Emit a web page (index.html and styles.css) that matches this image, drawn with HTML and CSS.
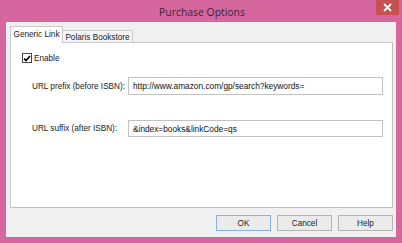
FILE: index.html
```html
<!DOCTYPE html>
<html>
<head>
<meta charset="utf-8">
<link rel="stylesheet" href="styles.css">
</head>
<body>
<div class="window">
  <div class="titlebar">
    <span class="title">Purchase Options</span>
    <div class="close"><svg width="9" height="9" viewBox="0 0 9 9"><path d="M1 1L8 8M8 1L1 8" stroke="#fff" stroke-width="1.8"/></svg></div>
  </div>
  <div class="client">
    <div class="tabstrip">
      <div class="tab active">Generic Link</div>
      <div class="tab">Polaris Bookstore</div>
    </div>
    <div class="panel">
      <div class="check">
        <span class="box"><svg width="9" height="9" viewBox="0 0 9 9"><path d="M1.2 4.6L3.4 6.9L7.9 1.6" fill="none" stroke="#000" stroke-width="1.8"/></svg></span>
        <span>Enable</span>
      </div>
      <div class="row first">
        <span class="lbl">URL prefix (before ISBN):</span>
        <div class="input">http://www.amazon.com/gp/search?keywords=</div>
      </div>
      <div class="row second">
        <span class="lbl">URL suffix (after ISBN):</span>
        <div class="input">&amp;index=books&amp;linkCode=qs</div>
      </div>
    </div>
    <div class="buttons">
      <div class="btn default">OK</div>
      <div class="btn">Cancel</div>
      <div class="btn">Help</div>
    </div>
  </div>
</div>
</body>
</html>
```

FILE: styles.css
```css
html, body {
  margin: 0;
  padding: 0;
}
body {
  width: 402px;
  height: 243px;
  overflow: hidden;
  font-family: "Liberation Sans", Arial, sans-serif;
  font-size: 8.2px;
  color: #1a1a1a;
}
.window {
  width: 402px;
  height: 243px;
  box-sizing: border-box;
  background: #d6679e;
  padding: 0 6px 6px 6px;
  display: flex;
  flex-direction: column;
}
.titlebar {
  height: 22px;
  display: flex;
  justify-content: center;
  position: relative;
}
.title {
  font-family: "Open Sans", "Liberation Sans", sans-serif;
  font-size: 10.4px;
  color: #3d2338;
  line-height: 22px;
  margin-left: 2px;
  margin-top: 1px;
}
.close {
  position: absolute;
  right: -3px;
  top: 0;
  width: 23px;
  height: 15px;
  background: #c75050;
  display: flex;
  align-items: center;
  justify-content: center;
}
.client {
  flex: 1;
  background: #f0f0f0;
  padding: 5px 3px 0 4px;
  display: flex;
  flex-direction: column;
}
.tabstrip {
  display: flex;
  align-items: flex-end;
  height: 16px;
  margin-bottom: -1px;
}
.tab {
  box-sizing: border-box;
  height: 13px;
  width: 70px;
  border: 1px solid #cacaca;
  border-bottom: none;
  border-left: none;
  background: #f4f4f4;
  display: flex;
  align-items: center;
  justify-content: center;
  padding-top: 1px;
}
.tab.active {
  position: relative;
  z-index: 1;
  width: 53px;
  height: 17px;
  background: #fff;
  border-left: 1px solid #cacaca;
  padding-top: 0;
  padding-bottom: 1px;
}
.panel {
  box-sizing: border-box;
  height: 166px;
  background: #fff;
  border: 1px solid #cacaca;
  border-right-color: #bfbfbf;
  border-bottom-color: #bfbfbf;
  padding: 10px 9px 0 11px;
  display: flex;
  flex-direction: column;
}
.check {
  display: flex;
  align-items: center;
  height: 10px;
  gap: 2px;
}
.box {
  box-sizing: border-box;
  width: 10px;
  height: 10px;
  border: 1px solid #4a4a4a;
  background: #fff;
  display: flex;
  align-items: center;
  justify-content: center;
}
.row {
  display: flex;
  align-items: center;
  padding-left: 10px;
}
.row.first {
  margin-top: 14px;
}
.row.second {
  margin-top: 25px;
}
.lbl {
  width: 96px;
}
.input {
  flex: 1;
  box-sizing: border-box;
  height: 18px;
  border: 1px solid #c2c2c2;
  background: #fff;
  padding-left: 4px;
  display: flex;
  align-items: center;
  font-size: 8.3px;
  color: #111;
}
.row.second .input {
  height: 17px;
}
.buttons {
  display: flex;
  justify-content: flex-end;
  gap: 6px;
  margin-top: 7px;
}
.btn {
  box-sizing: border-box;
  width: 55px;
  height: 16px;
  border: 1px solid #b4b4b4;
  background: #ebebeb;
  display: flex;
  align-items: center;
  justify-content: center;
}
.btn.default {
  border-color: #7eb4ea;
}
```
